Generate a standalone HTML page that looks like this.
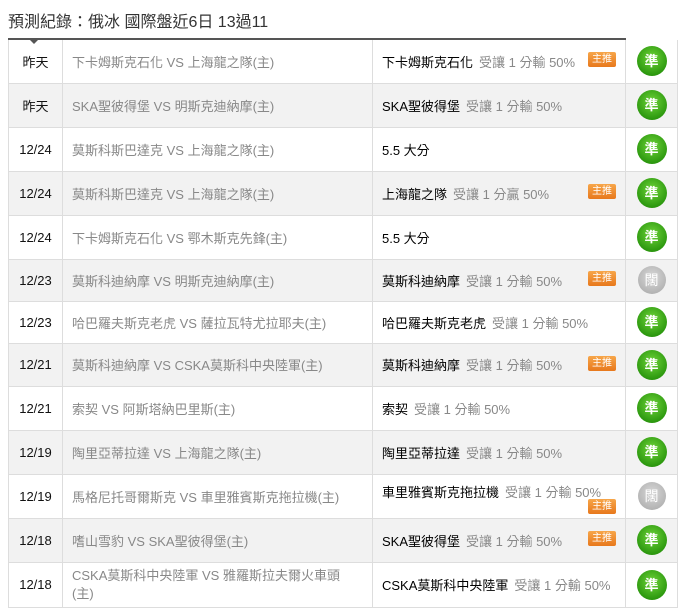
<!DOCTYPE html>
<html><head><meta charset="utf-8"><style>
*{margin:0;padding:0;box-sizing:border-box}
body{width:683px;height:614px;background:#fff;font-family:"Liberation Sans","Noto Sans CJK TC",sans-serif;position:relative;overflow:hidden}
.title{position:absolute;left:8px;top:8px;font-size:16px;color:#333}
.top{position:absolute;left:8px;top:38px;width:618px;height:2px;background:#555}
.arr{position:absolute;left:29px;top:39px;width:0;height:0;border-left:5px solid transparent;border-right:5px solid transparent;border-top:5px solid #555}
table{position:absolute;left:8px;top:40px;width:670px;border-collapse:collapse}
td{border:1px solid #ddd;font-size:13px;vertical-align:middle}
tr:first-child td{border-top:none}
tr:nth-child(even) td{background:#f2f2f2}
.d{width:54px;text-align:center;color:#111}
.m{width:310px;padding-left:9px;color:#888}
.p{width:253px;padding-left:9px;color:#000;position:relative}
.p span{color:#888;margin-left:6px}
.r{text-align:center}
.b{display:inline-block;width:30px;height:30px;border-radius:50%;background:radial-gradient(circle at 50% 40%,#6fd43a,#2e9a10 70%,#217a0a);color:#fff;font-size:14px;line-height:30px;font-weight:bold;vertical-align:middle}
.g{background:radial-gradient(circle at 50% 40%,#d8d8d8,#b5b5b5 70%,#a0a0a0);width:28px;height:28px;line-height:28px;font-weight:normal}
.t{position:absolute;right:9px;top:50%;margin-top:-9px;width:28px;height:15px;background:linear-gradient(#f7a64a,#e8781c);color:#fff;font-size:10px;line-height:15px;text-align:center;border-radius:2px;font-style:normal}
.t2{top:auto;bottom:4px;margin-top:0}
</style></head><body>
<div class="title">預測紀錄：俄冰 國際盤近6日 13過11</div>
<div class="top"></div><div class="arr"></div>
<table>
<tr style="height:43px"><td class="d">昨天</td><td class="m">下卡姆斯克石化 VS 上海龍之隊(主)</td><td class="p">下卡姆斯克石化<span>受讓 1 分輸 50%</span><i class="t">主推</i></td><td class="r"><b class="b">準</b></td></tr>
<tr style="height:44px"><td class="d">昨天</td><td class="m">SKA聖彼得堡 VS 明斯克迪納摩(主)</td><td class="p">SKA聖彼得堡<span>受讓 1 分輸 50%</span></td><td class="r"><b class="b">準</b></td></tr>
<tr style="height:44px"><td class="d">12/24</td><td class="m">莫斯科斯巴達克 VS 上海龍之隊(主)</td><td class="p">5.5 大分</td><td class="r"><b class="b">準</b></td></tr>
<tr style="height:44px"><td class="d">12/24</td><td class="m">莫斯科斯巴達克 VS 上海龍之隊(主)</td><td class="p">上海龍之隊<span>受讓 1 分贏 50%</span><i class="t">主推</i></td><td class="r"><b class="b">準</b></td></tr>
<tr style="height:44px"><td class="d">12/24</td><td class="m">下卡姆斯克石化 VS 鄂木斯克先鋒(主)</td><td class="p">5.5 大分</td><td class="r"><b class="b">準</b></td></tr>
<tr style="height:42px"><td class="d">12/23</td><td class="m">莫斯科迪納摩 VS 明斯克迪納摩(主)</td><td class="p">莫斯科迪納摩<span>受讓 1 分輸 50%</span><i class="t">主推</i></td><td class="r"><b class="b g">闊</b></td></tr>
<tr style="height:42px"><td class="d">12/23</td><td class="m">哈巴羅夫斯克老虎 VS 薩拉瓦特尤拉耶夫(主)</td><td class="p">哈巴羅夫斯克老虎<span>受讓 1 分輸 50%</span></td><td class="r"><b class="b">準</b></td></tr>
<tr style="height:43px"><td class="d">12/21</td><td class="m">莫斯科迪納摩 VS CSKA莫斯科中央陸軍(主)</td><td class="p">莫斯科迪納摩<span>受讓 1 分輸 50%</span><i class="t">主推</i></td><td class="r"><b class="b">準</b></td></tr>
<tr style="height:44px"><td class="d">12/21</td><td class="m">索契 VS 阿斯塔納巴里斯(主)</td><td class="p">索契<span>受讓 1 分輸 50%</span></td><td class="r"><b class="b">準</b></td></tr>
<tr style="height:44px"><td class="d">12/19</td><td class="m">陶里亞蒂拉達 VS 上海龍之隊(主)</td><td class="p">陶里亞蒂拉達<span>受讓 1 分輸 50%</span></td><td class="r"><b class="b">準</b></td></tr>
<tr style="height:44px"><td class="d">12/19</td><td class="m">馬格尼托哥爾斯克 VS 車里雅賓斯克拖拉機(主)</td><td class="p" style="vertical-align:top;padding-top:7px">車里雅賓斯克拖拉機<span>受讓 1 分輸 50%</span><i class="t t2">主推</i></td><td class="r"><b class="b g">闊</b></td></tr>
<tr style="height:44px"><td class="d">12/18</td><td class="m">嗜山雪豹 VS SKA聖彼得堡(主)</td><td class="p">SKA聖彼得堡<span>受讓 1 分輸 50%</span><i class="t">主推</i></td><td class="r"><b class="b">準</b></td></tr>
<tr style="height:45px"><td class="d">12/18</td><td class="m" style="line-height:18px">CSKA莫斯科中央陸軍 VS 雅羅斯拉夫爾火車頭<br>(主)</td><td class="p">CSKA莫斯科中央陸軍<span>受讓 1 分輸 50%</span></td><td class="r"><b class="b">準</b></td></tr>
</table>
</body></html>
